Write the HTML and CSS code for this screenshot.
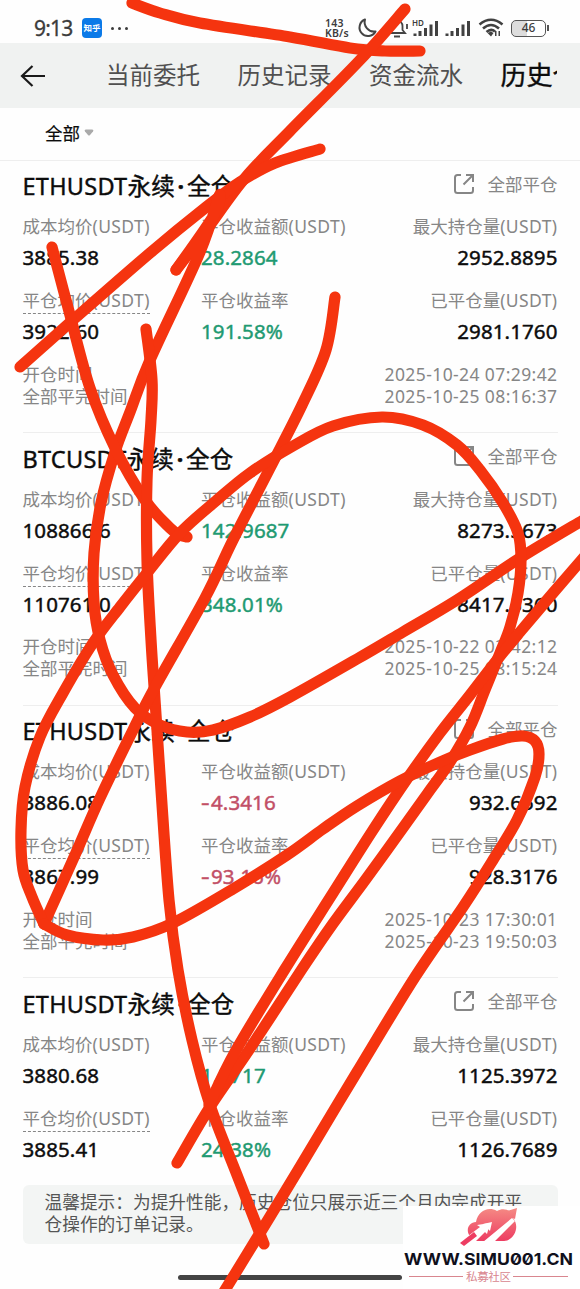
FILE: index.html
```html
<!DOCTYPE html>
<html lang="zh-CN">
<head>
    <meta charset="UTF-8">
    <meta name="viewport" content="width=device-width, initial-scale=1.0">
    <title>历史仓位</title>
    <link rel="stylesheet" href="styles.css">
</head>
<body>
    <svg class="defs" width="0" height="0">
        <symbol id="share" viewBox="0 0 22 22">
            <path d="M8 2H4.500Q2 2 2 4.500V17.500Q2 20 4.500 20H17.500Q20 20 20 17.500V14M13 2H20V9M20 2L10.500 11.500" fill="none" stroke="#868686" stroke-width="2"/>
        </symbol>
        <symbol id="signal" viewBox="0 0 26 17">
            <path d="M2 13.500V16M7 11V16M12.500 8V16M18 4.500V16M23.500 1V16" fill="none" stroke="#414141" stroke-width="3"/>
        </symbol>
    </svg>

    <div class="status">
        <span class="time">9:13</span>
        <span class="app">知乎</span>
        <span class="dots"><i></i><i></i><i></i></span>
        <span class="speed"><span>143</span><span>KB/s</span></span>
        <svg class="moon" width="20" height="20" viewBox="0 0 20 20"><path d="M8 1.500A8.500 8.500 0 1 0 18.500 13.500A9.500 9.500 0 0 1 8 1.500Z" fill="none" stroke="#444" stroke-width="2" stroke-linejoin="round"/></svg>
        <svg class="bell" width="24" height="20" viewBox="0 0 24 20"><path d="M4 15H20L17.500 12V8A5.500 5.500 0 0 0 6.500 8V12ZM9 18.500H15M2 6V11M22 6V11" fill="none" stroke="#444" stroke-width="1.800"/></svg>
        <span class="hd">HD</span>
        <svg class="signal" width="26" height="17"><use href="#signal"/></svg>
        <svg class="signal second" width="26" height="17"><use href="#signal"/></svg>
        <svg class="wifi" width="26" height="20" viewBox="0 0 26 20"><path d="M1.500 6.500Q13 -3 24.500 6.500M5 10.500Q13 3.500 21 10.500M8.500 14Q13 10 17 13.500" fill="none" stroke="#414141" stroke-width="2.600"/><path d="M9.500 15L13 13.500L15.500 15L13 18.500ZM17 13H18.500V18H17ZM20.500 13H22V18H20.500Z" fill="#414141"/></svg>
        <span class="battery">46</span>
    </div>

    <div class="header">
        <svg class="back" width="26" height="24" viewBox="0 0 26 24"><path d="M12.500 2L2 12L12.500 22M2 12H25" fill="none" stroke="#1a1a1a" stroke-width="2.200"/></svg>
        <div class="tabs">
            <span>当前委托</span>
            <span>历史记录</span>
            <span>资金流水</span>
            <span class="active">历史仓位</span>
        </div>
    </div>

    <div class="filter">全部<svg width="10" height="7" viewBox="0 0 10 7"><path d="M2 .5H8Q10 .5 9 2.500L6 6Q5 7 4 6L1 2.500Q0 .5 2 .5Z" fill="#aaa"/></svg></div>

    <div class="card">
        <div class="title"><h3>ETHUSDT永续<b>·</b>全仓</h3><svg width="22" height="22"><use href="#share"/></svg><span>全部平仓</span></div>
        <div class="row label"><span>成本均价<em>(USDT)</em></span><span>平仓收益额<em>(USDT)</em></span><span>最大持仓量<em>(USDT)</em></span></div>
        <div class="row value"><span>3885.38</span><span class="green">28.2864</span><span>2952.8895</span></div>
        <div class="row label second"><span><u>平仓均价<em>(USDT)</em></u></span><span>平仓收益率</span><span>已平仓量<em>(USDT)</em></span></div>
        <div class="row value"><span>3922.60</span><span class="green">191.58%</span><span>2981.1760</span></div>
        <div class="date first"><span>开仓时间</span><time>2025-10-24 07:29:42</time></div>
        <div class="date"><span>全部平完时间</span><time>2025-10-25 08:16:37</time></div>
    </div>

    <div class="card">
        <div class="title"><h3>BTCUSDT永续<b>·</b>全仓</h3><svg width="22" height="22"><use href="#share"/></svg><span>全部平仓</span></div>
        <div class="row label"><span>成本均价<em>(USDT)</em></span><span>平仓收益额<em>(USDT)</em></span><span>最大持仓量<em>(USDT)</em></span></div>
        <div class="row value"><span>108866.6</span><span class="green">142.9687</span><span>8273.5673</span></div>
        <div class="row label second"><span><u>平仓均价<em>(USDT)</em></u></span><span>平仓收益率</span><span>已平仓量<em>(USDT)</em></span></div>
        <div class="row value"><span>110761.0</span><span class="green">348.01%</span><span>8417.5360</span></div>
        <div class="date first"><span>开仓时间</span><time>2025-10-22 03:42:12</time></div>
        <div class="date"><span>全部平完时间</span><time>2025-10-25 08:15:24</time></div>
    </div>

    <div class="card">
        <div class="title"><h3>ETHUSDT永续<b>·</b>全仓</h3><svg width="22" height="22"><use href="#share"/></svg><span>全部平仓</span></div>
        <div class="row label"><span>成本均价<em>(USDT)</em></span><span>平仓收益额<em>(USDT)</em></span><span>最大持仓量<em>(USDT)</em></span></div>
        <div class="row value"><span>3886.08</span><span class="red"><s>-</s>4.3416</span><span>932.6592</span></div>
        <div class="row label second"><span><u>平仓均价<em>(USDT)</em></u></span><span>平仓收益率</span><span>已平仓量<em>(USDT)</em></span></div>
        <div class="row value"><span>3867.99</span><span class="red"><s>-</s>93.16%</span><span>928.3176</span></div>
        <div class="date first"><span>开仓时间</span><time>2025-10-23 17:30:01</time></div>
        <div class="date"><span>全部平完时间</span><time>2025-10-23 19:50:03</time></div>
    </div>

    <div class="card last">
        <div class="title"><h3>ETHUSDT永续<b>·</b>全仓</h3><svg width="22" height="22"><use href="#share"/></svg><span>全部平仓</span></div>
        <div class="row label"><span>成本均价<em>(USDT)</em></span><span>平仓收益额<em>(USDT)</em></span><span>最大持仓量<em>(USDT)</em></span></div>
        <div class="row value"><span>3880.68</span><span class="green">1.3717</span><span>1125.3972</span></div>
        <div class="row label second"><span><u>平仓均价<em>(USDT)</em></u></span><span>平仓收益率</span><span>已平仓量<em>(USDT)</em></span></div>
        <div class="row value"><span>3885.41</span><span class="green">24.38%</span><span>1126.7689</span></div>
    </div>

    <div class="notice">温馨提示：为提升性能，历史仓位只展示近三个月内完成开平<br>仓操作的订单记录。</div>
    <div class="homebar"></div>

    <div class="watermark">
        <svg width="177" height="83" viewBox="0 0 177 83">
            <defs>
                <linearGradient id="pink" x1="0" y1="0" x2="0" y2="1"><stop offset="0" stop-color="#f58a84"/><stop offset="1" stop-color="#ed3d62"/></linearGradient>
            </defs>
            <path d="M67 30C62 24 66 16 73 16C75 5 85 0 94 5C99 2 104 3 108 6L104 5L114 2L112 13L110 12C117 20 112 34 101 35H72L66 33Z" fill="url(#pink)"/>
            <path d="M64 33L82 20L80 18L89 16L87 25L85 23L72 36H66ZM80 36L109 12L112 15L92 35Z" fill="#fff"/>
            <path d="M57 36L77 21L74 19L87 17L84 28L81 25L61 40Z" fill="#fff"/>
            <path d="M57 37L71 26L74 30L61 40Z" fill="#ed3d62"/>
            <text class="url" x="1" y="59" textLength="169" lengthAdjust="spacingAndGlyphs">WWW.SIMU001.CN</text>
            <path d="M6 70.500H60M110 70.500H165" stroke="#d9868f" stroke-width="1"/>
            <text class="name" x="63" y="75" textLength="45">私募社区</text>
        </svg>
    </div>

    <!-- 红色涂鸦 -->
    <svg class="scribble" width="580" height="1289" viewBox="0 0 580 1289"></svg>

    <script src="script.js"></script>
</body>
</html>
```
FILE: styles.css
```css
* {
    box-sizing: border-box;
}
body {
    position: relative;
    width: 580px;
    height: 1289px;
    margin: 0;
    overflow: hidden;
    background: #fefefe;
    color: #0c0c0c;
    font-family: "Noto Sans", "Noto Sans CJK SC", sans-serif;
}
em, s, u {
    font-style: normal;
    text-decoration: none;
}
.defs {
    position: absolute;
}

.status {
    display: flex;
    align-items: center;
    height: 43px;
    padding: 13px 31px 0 34px;
    color: #3c3c3c;
}
.time {
    width: 48px;
    font-size: 21px;
    line-height: 30px;
    letter-spacing: -0.8px;
    -webkit-text-stroke: 0.3px;
}
.app {
    width: 20px;
    height: 20px;
    border-radius: 4px;
    background: #0b7ae8;
    color: #fff;
    font-size: 8.5px;
    font-weight: bold;
    line-height: 19px;
    text-align: center;
}
.dots {
    display: flex;
    gap: 4px;
    margin-left: 9px;
}
.dots i {
    width: 3px;
    height: 3px;
    border-radius: 50%;
    background: #3c3c3c;
}
.speed {
    display: flex;
    flex-direction: column;
    width: 27px;
    margin-left: auto;
    font-size: 10.5px;
    font-weight: 600;
    line-height: 10px;
    letter-spacing: 0.200px;
    white-space: nowrap;
}
.moon {
    margin-left: 5px;
}
.bell {
    margin-left: 8px;
}
.hd {
    width: 13px;
    margin: 5px -12px 0 3px;
    align-self: flex-start;
    font-size: 8px;
    font-weight: 600;
    line-height: 10px;
}
.signal.second {
    margin-left: 6px;
}
.wifi {
    margin-left: 7px;
}
.battery {
    position: relative;
    width: 35px;
    height: 17px;
    margin: 0 3px 0 7px;
    border: 1.5px solid #555;
    border-radius: 5px;
    background: linear-gradient(90deg, #ddd 45%, #fff 45%);
    font-size: 12px;
    font-weight: 500;
    line-height: 13px;
    text-align: center;
}
.battery::after {
    content: "";
    position: absolute;
    top: 4px;
    right: -4px;
    width: 2px;
    height: 6px;
    background: #555;
}

.header {
    display: flex;
    align-items: center;
    height: 65px;
    padding: 0 23px 0 20px;
    background: #f0f2f1;
}
.tabs {
    display: flex;
    flex: 1;
    gap: 37.5px;
    align-items: center;
    margin: -2px 0 0 60px;
    overflow: hidden;
    color: #505050;
    font-size: 23.5px;
    line-height: 40px;
    white-space: nowrap;
}
.tabs .active {
    color: #0c0c0c;
    font-size: 26px;
    -webkit-text-stroke: 0.4px;
}

.filter {
    display: flex;
    align-items: center;
    height: 52.500px;
    padding: 0 0 2px 45px;
    border-bottom: 1px solid #eee;
    font-size: 17.5px;
    -webkit-text-stroke: 0.2px;
}
.filter svg {
    margin-left: 4px;
}

.card {
    height: 272.5px;
    margin: 0 22.500px;
    padding-top: 8.5px;
    border-bottom: 1px solid #eee;
}
.card.last {
    height: 207px;
    border-bottom: none;
}
.title {
    display: flex;
    align-items: center;
    height: 34px;
}
h3 {
    flex: 1;
    margin: 0;
    font-size: 23.5px;
    font-weight: 400;
    line-height: 34px;
    letter-spacing: 0.250px;
    -webkit-text-stroke: 0.4px;
}
h3 b {
    display: inline-block;
    width: 12px;
    text-align: center;
}
.title svg {
    margin: -5px 13px 0 0;
}
.title span {
    margin-top: -6px;
    color: #868686;
    font-size: 17.5px;
}
.row {
    display: grid;
    grid-template-columns: 178.500px 160px 1fr;
    white-space: nowrap;
}
.row > :last-child {
    text-align: right;
}
.label {
    height: 24px;
    margin-top: 11px;
    color: #868686;
    font-size: 17.5px;
    line-height: 24px;
}
.label.second {
    margin-top: 17px;
}
.label em {
    letter-spacing: 0.400px;
}
.label u {
    display: inline-block;
    height: 26px;
    border-bottom: 1px dashed #868686;
}
.value {
    height: 28px;
    margin-top: 5px;
    font-size: 20.500px;
    line-height: 28px;
    letter-spacing: 0.100px;
    -webkit-text-stroke: 0.45px;
}
.value s {
    display: inline-block;
    width: 10px;
    transform: scaleX(1.3);
    transform-origin: left;
}
.green {
    color: #1f9a72;
}
.red {
    color: #c24f66;
}
.date {
    display: flex;
    justify-content: space-between;
    height: 22px;
    color: #868686;
    font-size: 17.5px;
    line-height: 22px;
}
.date.first {
    margin-top: 17.5px;
}
time {
    letter-spacing: 0.400px;
}

.notice {
    height: 59px;
    margin: 0 22.500px;
    padding: 6px 22px;
    border-radius: 6px;
    background: #f3f5f4;
    color: #555;
    font-size: 17.700px;
    line-height: 22px;
    white-space: nowrap;
}
.homebar {
    width: 224px;
    height: 5px;
    margin: 31px auto 0;
    border-radius: 3px;
    background: #444;
}

.watermark {
    position: absolute;
    right: 0;
    bottom: 0;
    width: 177px;
    height: 83px;
    background: #fff;
}
.url {
    fill: #10101c;
    font-family: Inter, sans-serif;
    font-size: 16.500px;
    font-weight: 700;
    font-feature-settings: "zero";
}
.name {
    fill: #d9868f;
    font-family: "Noto Sans CJK SC", sans-serif;
    font-size: 11.500px;
}
.scribble {
    position: absolute;
    top: 0;
    left: 0;
}
.scribble path {
    fill: none;
    stroke: #f5340f;
    stroke-width: 11.200;
    stroke-linecap: round;
    stroke-linejoin: round;
}
```
FILE: script.js
```js
// 每一笔经过的点
const strokes = [
    [[132,3],[160,13],[200,23],[290,37],[350,48],[385,51],[420,51]],
    [[405,9],[360,60],[290,131],[245,178],[205,232],[176,270]],
    [[320,149],[275,163],[240,182],[205,208],[150,253],[73,320],[20,367]],
    [[176,270],[214,215],[219,196],[200,252],[150,360],[130,412],[115,452],[101,503],[94,553],[94,603],[100,640],[113,675],[135,708],[160,725],[187,732],[213,730],[250,717],[290,697],[357,659],[403,632],[457,600],[520,558],[585,519]],
    [[52,247],[70,315],[90,388],[115,448],[145,500],[170,528],[180,535],[187,537]],
    [[146,329],[152,380],[151,420],[147,480],[147,560],[151,640],[155,700],[161,790],[169,900],[178,970],[192,1040],[210,1105],[237,1175],[264,1244]],
    [[335,297],[326,350],[302,405],[270,468],[233,540],[205,598],[155,687],[133,730],[100,798],[75,855],[44,924]],
    [[44,924],[32,897],[23,870],[21,830],[25,787],[40,737],[63,693],[93,643],[120,607],[147,573],[180,533],[217,500],[250,473],[293,446],[333,426],[382,417],[423,425],[457,445],[480,470],[503,503],[518,533],[521,560],[518,593],[510,627],[500,653],[485,690],[470,727],[450,762],[430,790],[405,825],[366,879],[332,925],[302,969],[249,1050],[210,1107],[177,1163]],
    [[585,556],[553,593],[520,632],[497,660],[470,695],[440,733],[407,779],[373,830],[333,893],[285,969],[235,1052],[209,1105]],
    [[44,924],[67,935],[103,940],[133,937],[173,923],[233,889],[287,855],[323,829],[357,806],[400,781],[440,762],[470,750],[503,739],[523,736],[535,741],[539,754],[535,777],[517,820],[493,860],[463,907],[415,977],[357,1072],[300,1167],[260,1233],[222,1295]]
];

const svg = document.querySelector(".scribble");

strokes.forEach(p => {
    let d = "M" + p[0];
    for (let i = 0; i < p.length - 1; i++) {
        const a = p[i - 1] || p[i], b = p[i], c = p[i + 1], e = p[i + 2] || c;
        d += "C" + [
            b[0] + (c[0] - a[0]) / 6, b[1] + (c[1] - a[1]) / 6,
            c[0] - (e[0] - b[0]) / 6, c[1] - (e[1] - b[1]) / 6,
            c[0], c[1]
        ].join(" ");
    }
    const path = document.createElementNS("http://www.w3.org/2000/svg", "path");
    path.setAttribute("d", d);
    svg.appendChild(path);
});
```
